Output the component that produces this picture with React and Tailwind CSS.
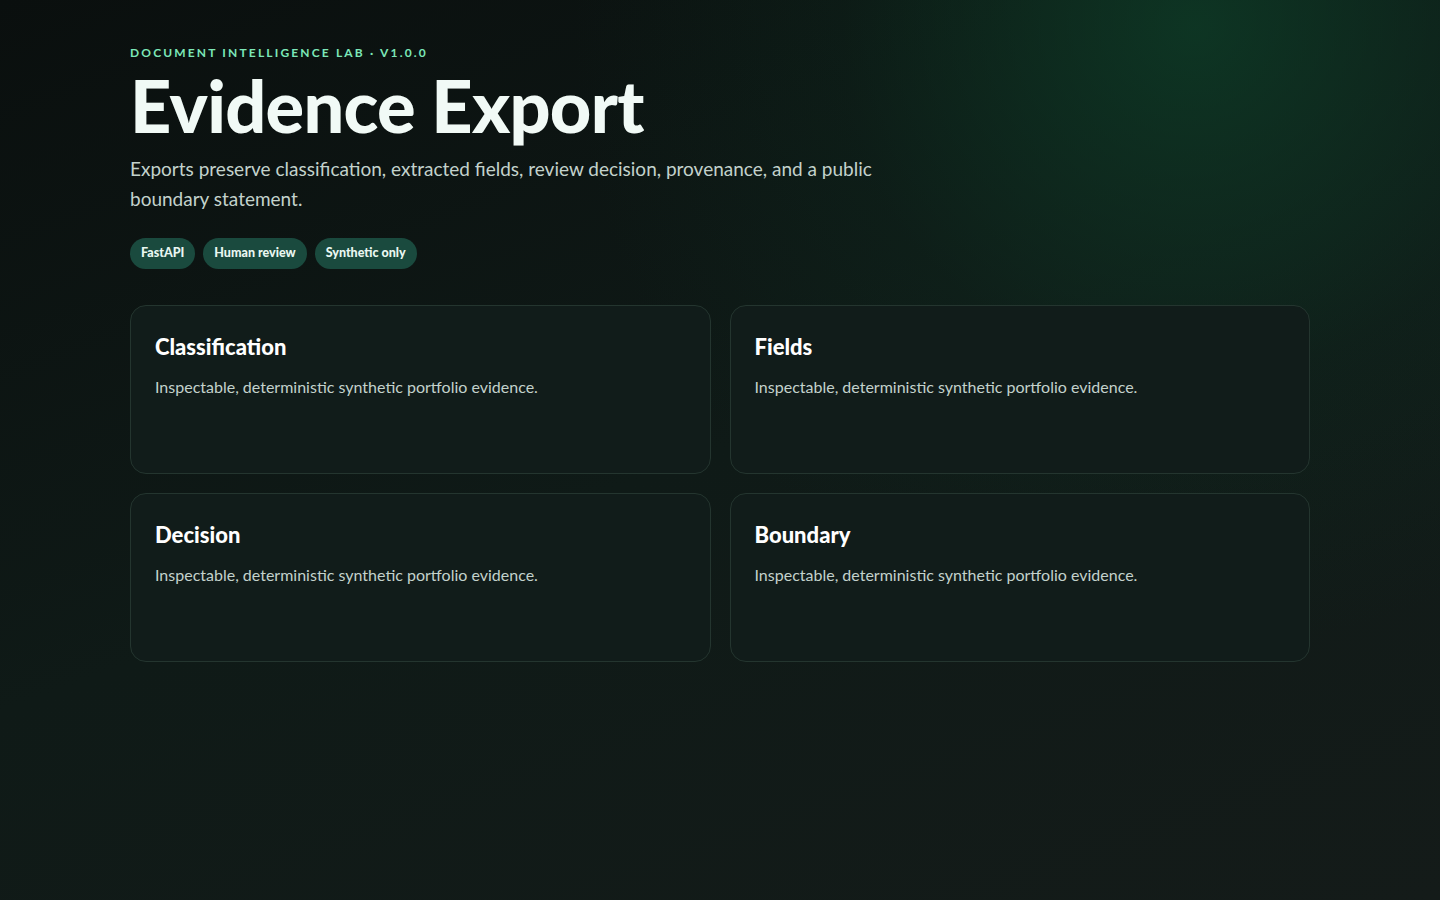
const cards = ['Classification', 'Fields', 'Decision', 'Boundary']

export default function App() {
  return (
    <div
      className="min-h-[900px] w-full bg-[#0b1110] text-[#eef7f3]"
      style={{
        fontFamily: 'Lato, "Noto Sans", sans-serif',
        backgroundImage:
          'radial-gradient(circle at 83% 3%, rgba(14,66,42,0.7), rgba(14,52,36,0.22) 24%, transparent 42%), linear-gradient(160deg, #0a0f0e 0%, #0f1a17 50%, #141b19 100%)',
      }}
    >
      <div className="mx-auto w-[1180px] pt-[44px]">
        <div className="text-[12px] font-bold uppercase tracking-[0.18em] text-[#7ce7b8]">
          Document Intelligence Lab · v1.0.0
        </div>
        <h1 className="mt-[4px] text-[72px] font-black leading-[78px] tracking-[-0.01em] text-[#f1faf6]">
          Evidence Export
        </h1>
        <p className="mt-[10px] max-w-[760px] text-[19px] leading-[30px] text-[#c3d2cc]">
          Exports preserve classification, extracted fields, review decision, provenance, and a public
          boundary statement.
        </p>
        <div className="mt-[24px] flex gap-2">
          {['FastAPI', 'Human review', 'Synthetic only'].map(t => (
            <span key={t} className="rounded-full bg-[#1a4a3e] px-[11px] py-[6px] text-[12.5px] font-black text-[#e9f7f1]">
              {t}
            </span>
          ))}
        </div>
        <div className="mt-[36px] grid grid-cols-2 gap-[19px]">
          {cards.map(c => (
            <div key={c} className="h-[169px] rounded-[16px] border border-[#24352f] bg-[#111c1a] px-6 pt-[26px]">
              <h2 className="text-[22px] font-black leading-[30px] text-white">{c}</h2>
              <p className="mt-[13px] text-[16px] text-[#c3d2cc]">
                Inspectable, deterministic synthetic portfolio evidence.
              </p>
            </div>
          ))}
        </div>
      </div>
    </div>
  )
}
